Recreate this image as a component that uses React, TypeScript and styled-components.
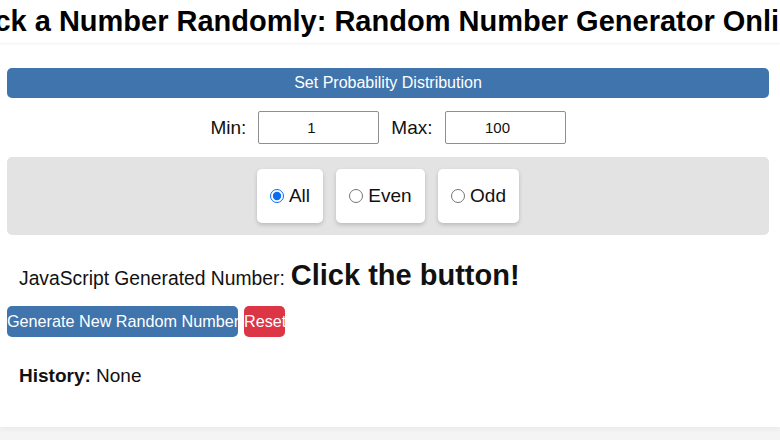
import * as React from 'react'
import { useState } from 'react'
import styled, { createGlobalStyle } from 'styled-components'

const GlobalStyle = createGlobalStyle`
  html, body {
    margin: 0;
    padding: 0;
    background: #f4f4f4;
    font-family: "Liberation Sans", Arial, sans-serif;
    color: #111;
    overflow: hidden;
  }
`

const Page = styled.div`
  width: 780px;
  height: 440px;
  overflow: hidden;
`

const Header = styled.header`
  height: 43px;
  background: #fff;
  display: flex;
  justify-content: center;
  overflow: hidden;
  box-shadow: 0 1px 2px rgba(0, 0, 0, 0.06);
  position: relative;
  z-index: 1;
`

const Title = styled.h1`
  margin: 0;
  flex-shrink: 0;
  white-space: nowrap;
  font-size: 29px;
  line-height: 42px;
  font-weight: bold;
  color: #000;
`

const Main = styled.main`
  background: #fff;
  height: 384px;
  padding: 25px 11px 0 7px;
  box-sizing: border-box;
  box-shadow: 0 2px 6px rgba(0, 0, 0, 0.05);
`

const DistButton = styled.button`
  display: block;
  width: 100%;
  height: 30px;
  border: 0;
  border-radius: 5px;
  background: #3f74ad;
  color: #fff;
  font-family: inherit;
  font-size: 16px;
  padding: 0;
`

const RangeRow = styled.div`
  display: flex;
  justify-content: center;
  align-items: center;
  gap: 12px;
  margin: 13px 0;
`

const RangeLabel = styled.label`
  font-size: 19px;
`

const NumberInput = styled.input`
  width: 121px;
  height: 33px;
  box-sizing: border-box;
  border: 1px solid #8f8f8f;
  border-radius: 2px;
  text-align: center;
  font-family: inherit;
  font-size: 15px;
  color: #111;
  padding: 0 2px;
`

const ParityPanel = styled.div`
  background: #e3e3e3;
  border-radius: 5px;
  height: 78px;
  display: flex;
  justify-content: center;
  align-items: center;
  gap: 13px;
`

const ParityCard = styled.label<{ w: number }>`
  width: ${p => p.w}px;
  height: 54px;
  box-sizing: border-box;
  background: #fff;
  border-radius: 5px;
  box-shadow: 0 2px 4px rgba(0, 0, 0, 0.18);
  display: flex;
  align-items: center;
  justify-content: center;
  font-size: 19px;
  cursor: pointer;
`

const Radio = styled.input`
  width: 14px;
  height: 14px;
  margin: 0 5px 0 0;
  accent-color: #0a6cf0;
`

const ResultLine = styled.p`
  margin: 24px 0 0 12px;
  font-size: 19.3px;
  display: flex;
  align-items: baseline;
  gap: 6px;
`

const ResultValue = styled.span`
  font-size: 29px;
  font-weight: bold;
`

const ButtonRow = styled.div`
  display: flex;
  gap: 6px;
  margin-top: 14px;
`

const ActionButton = styled.button<{ tone: 'blue' | 'red'; w: number }>`
  width: ${p => p.w}px;
  height: 31px;
  border: 0;
  border-radius: 5px;
  padding: 0;
  overflow: hidden;
  white-space: nowrap;
  text-align: left;
  color: #fff;
  font-family: inherit;
  font-size: 16.2px;
  background: ${p => (p.tone === 'blue' ? '#3f74ad' : '#dc3545')};
`

const History = styled.p`
  margin: 28px 0 0 12px;
  font-size: 19px;
`

const parities = [
  { key: 'all', label: 'All', w: 66 },
  { key: 'even', label: 'Even', w: 89 },
  { key: 'odd', label: 'Odd', w: 81 },
]

const App: React.FC<{}> = () => {
  const [parity, setParity] = useState('all')
  const [min, setMin] = useState('1')
  const [max, setMax] = useState('100')

  return (
    <Page>
      <GlobalStyle />
      <Header>
        <Title>Pick a Number Randomly: Random Number Generator Online</Title>
      </Header>
      <Main>
        <DistButton>Set Probability Distribution</DistButton>
        <RangeRow>
          <RangeLabel>Min:</RangeLabel>
          <NumberInput type="number" value={min} onChange={e => setMin(e.target.value)} />
          <RangeLabel>Max:</RangeLabel>
          <NumberInput type="number" value={max} onChange={e => setMax(e.target.value)} />
        </RangeRow>
        <ParityPanel>
          {parities.map(p => (
            <ParityCard key={p.key} w={p.w}>
              <Radio
                type="radio"
                name="parity"
                checked={parity === p.key}
                onChange={() => setParity(p.key)}
              />
              {p.label}
            </ParityCard>
          ))}
        </ParityPanel>
        <ResultLine>
          JavaScript Generated Number:
          <ResultValue>Click the button!</ResultValue>
        </ResultLine>
        <ButtonRow>
          <ActionButton tone="blue" w={231}>Generate New Random Number</ActionButton>
          <ActionButton tone="red" w={41}>Reset</ActionButton>
        </ButtonRow>
        <History>
          <b>History:</b> None
        </History>
      </Main>
    </Page>
  )
}

export default App
